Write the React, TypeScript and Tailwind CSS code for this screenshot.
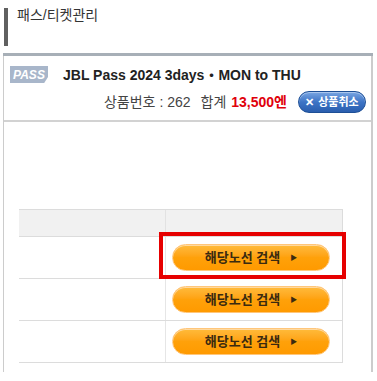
import React from "react";

const font = "font-['Liberation_Sans','Noto_Sans_CJK_KR',sans-serif]";

const SearchButton = () => (
  <button className="flex h-[27px] w-[158px] items-center justify-center gap-[10px] rounded-full border border-[#ffc67a] bg-gradient-to-b from-[#ffbb3a] via-[#ffa10a] to-[#ff9a00] shadow-[inset_0_1px_0_#ffd9a0]">
    <span className="text-[13px] font-bold leading-none text-[#3a2a10]">해당노선 검색</span>
    <span className="text-[7px] leading-none text-[#3a2a10]">▶</span>
  </button>
);

export default function App() {
  const rows = [0, 1, 2];
  return (
    <div className={`h-[381px] w-full overflow-hidden bg-white ${font} text-[#333]`}>
      <div className="ml-[4px] mt-[8px] h-[38px] border-l-4 border-[#606060] pl-[9px] text-[14px] leading-[14px]">
        패스/티켓관리
      </div>
      <div className="ml-[3px] mr-[4px] mt-[7px] border-t-[3px] border-[#a7afb7]">
        <div className="h-[316px] border-l border-r-2 border-[#cccccc]">
          <div className="border-b-2 border-[#d2d2d2] pb-[7px]">
            <div className="flex items-center pl-[6px] pt-[10px]">
              <div className="flex h-[17px] w-[38px] items-center justify-center bg-[#a8b6ca] [clip-path:polygon(0_0,100%_0,100%_65%,90%_100%,0_100%)]">
                <span className="text-[12px] font-bold italic leading-none text-white">PASS</span>
              </div>
              <div className="ml-[15px] text-[14px] font-bold leading-none text-[#222]">
                JBL Pass 2024 3days・MON to THU
              </div>
            </div>
            <div className="mt-[8px] flex items-center justify-end pr-[5px]">
              <span className="text-[14px] leading-none text-[#444]">상품번호 : 262</span>
              <span className="ml-[10px] text-[14px] leading-none text-[#444]">합계</span>
              <span className="ml-[5px] text-[14px] font-bold leading-none text-[#e0000b]">13,500엔</span>
              <button className="ml-[11px] flex h-[22px] w-[68px] items-center justify-center gap-[4px] rounded-full border border-[#1d4f96] bg-gradient-to-b from-[#7aa6e2] via-[#3d74c6] to-[#2a5eae] shadow-[inset_0_1px_0_#a9c6ee]">
                <span className="text-[11px] font-bold leading-none text-white">✕</span>
                <span className="text-[11px] font-bold leading-none text-white">상품취소</span>
              </button>
            </div>
          </div>
          <div className="ml-[15px] mr-[28px] mt-[87px] border-r border-[#dcdcdc]">
            <div className="grid h-[28px] grid-cols-[147px_1fr] border-y border-[#dcdcdc] bg-[#f1f1f1]">
              <div className="border-r border-[#e2e2e2]" />
              <div />
            </div>
            {rows.map((r) => (
              <div key={r} className="grid grid-cols-[147px_1fr] border-b border-[#dcdcdc]">
                <div className="border-r border-[#e6e6e6]" />
                <div className="relative flex h-[41px] items-center pl-[6px]">
                  <SearchButton />
                  {r === 0 && (
                    <div className="pointer-events-none absolute left-[-7px] top-[-5px] h-[47px] w-[187px] border-4 border-[#e60000]" />
                  )}
                </div>
              </div>
            ))}
          </div>
        </div>
      </div>
    </div>
  );
}
